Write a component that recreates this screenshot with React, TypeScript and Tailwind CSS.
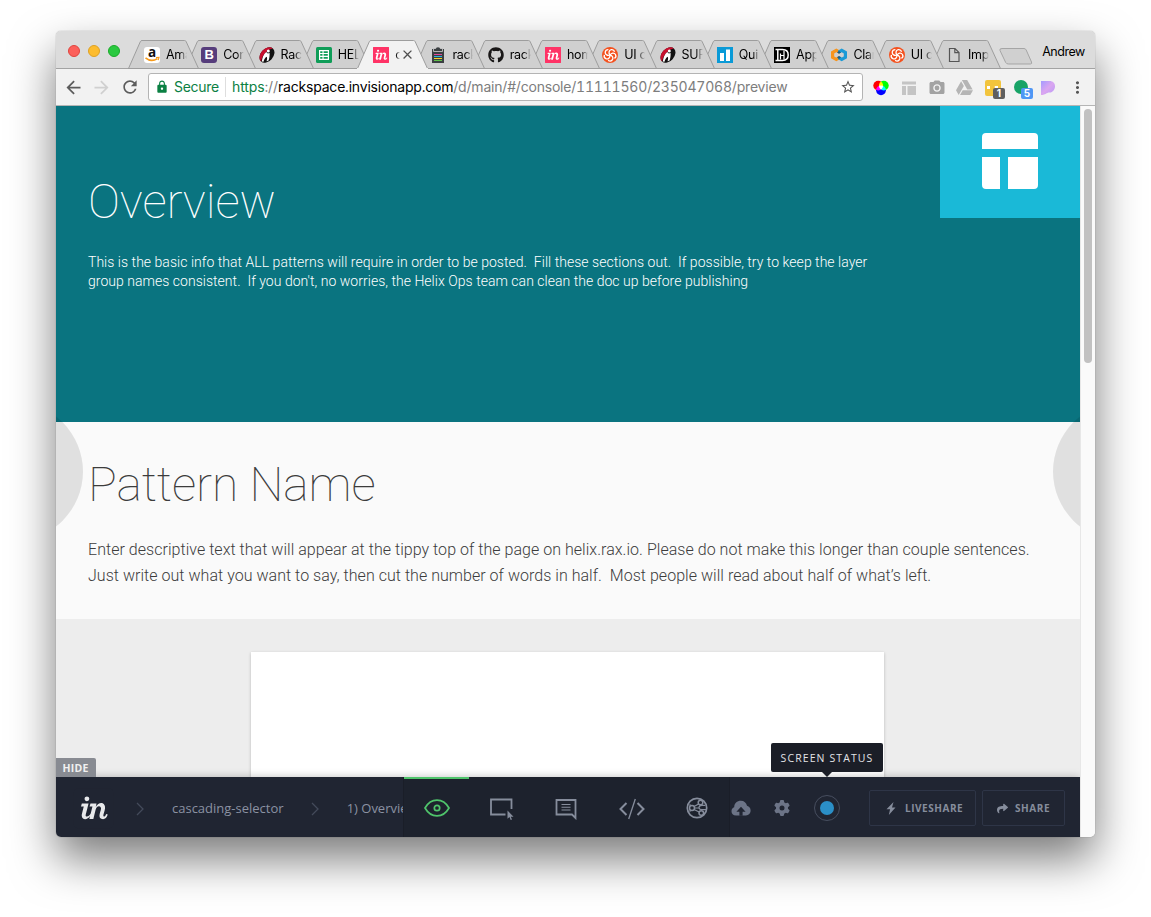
import type { ReactNode } from "react";
import { FaGithub, FaInvision, FaGoogleDrive, FaShare } from "react-icons/fa";
import { FaGear } from "react-icons/fa6";
import {
  MdArrowBack,
  MdArrowForward,
  MdRefresh,
  MdLock,
  MdStarBorder,
  MdMoreVert,
  MdCameraAlt,
  MdClose,
} from "react-icons/md";

function Amazon() {
  return (
    <span className="block h-4 w-4 rounded-[3px] bg-white">
      <svg viewBox="0 0 16 16" className="h-4 w-4 overflow-visible">
        <text x="4" y="9.800" fontSize="13.500" fontWeight="700" fontFamily="Open Sans, sans-serif" fill="#111">a</text>
        <path d="M1.500 10.800c3.600 3 8.400 3 12 .8" fill="none" stroke="#f79b1b" strokeWidth="1.600" />
        <path d="M12 10.600l3-.3-.8 2.800" fill="none" stroke="#f79b1b" strokeWidth="1.100" />
      </svg>
    </span>
  );
}

function Bootstrap() {
  return (
    <span className="flex h-4 w-4 items-center justify-center rounded-[3px] bg-[#563d7c] font-['Liberation_Sans',sans-serif] text-[13px] leading-4 font-bold text-white">
      B
    </span>
  );
}

function Rackspace() {
  return (
    <svg viewBox="0 0 16 16" className="h-4 w-4">
      <g transform="rotate(42 8 8)">
        <ellipse cx="8" cy="8" rx="6.200" ry="8.800" fill="#111" />
        <path d="M8-.8C4-.8 1.800 4 1.800 8c0 4.200 2.200 8.800 6.200 8.800-1.600-2.400-2.600-5-2.600-8.800S6.400 1.500 8-.8z" fill="#c8102e" />
      </g>
      <path d="M2.800 14.500c.6-4 1.500-7.200 4.400-9.600l1.600 1.700 1.800-.6c.2 2.400-.2 5.200-1 7.500l-2 .8c.6-2 .7-3.500.1-4.500-1.600 1-2.600 2.600-3.200 4.900z" fill="#fff" />
      <circle cx="9.300" cy="3.900" r="1.500" fill="#fff" />
    </svg>
  );
}

function Sheets() {
  return (
    <svg viewBox="0 0 16 16" className="h-4 w-4">
      <rect width="16" height="16" rx="1.500" fill="#0f9d58" />
      <rect x="3" y="3" width="10" height="10" fill="#fff" />
      <path d="M4.200 4.200h2.300v1.700H4.200zM7.600 4.200h4.200v1.700H7.600zM4.200 7h2.300v1.800H4.200zM7.600 7h4.200v1.800H7.600zM4.200 10h2.300v1.800H4.200zM7.600 10h4.200v1.800H7.600z" fill="#0f9d58" />
    </svg>
  );
}

function Invision() {
  return (
    <span className="block h-4 w-4 overflow-hidden rounded-[1px] bg-[#ff3366]">
      <FaInvision className="-mt-[2px] -ml-[2px] h-5 w-5 bg-[linear-gradient(#fff,#fff)] bg-[length:72%_64%] bg-center bg-no-repeat text-[#ff3366]" />
    </span>
  );
}

function Clipboard() {
  return (
    <svg viewBox="0 0 16 16" className="h-4 w-4">
      <path d="M2 2h12v14H2z" fill="#3b3f42" />
      <path d="M3.500 1.500h2.200C6 .3 7 0 8 0s2 .3 2.300 1.500h2.200v3h-9z" fill="#3b3f42" stroke="#d0d0d0" strokeWidth=".8" />
      <path d="M4 7.500h8" stroke="#e0499c" />
      <path d="M4 9.500h8" stroke="#2bb5e0" />
      <path d="M4 11.500h8" stroke="#f5d327" />
      <path d="M4 13.500h8" stroke="#5fbf4a" />
    </svg>
  );
}

function Swirl() {
  return (
    <svg viewBox="0 0 16 16" className="h-4 w-4">
      <circle cx="8" cy="8" r="8" fill="#f4511e" />
      <g fill="none" stroke="#fff" strokeWidth="1.300">
        {[0, 72, 144, 216, 288].map((a) => (
          <g key={a} transform={`rotate(${a} 8 8)`}>
            <path d="M8 8C6.300 6 6.800 3.200 9.200 2.600 11 2.300 12.200 3.400 12.600 4.800" />
          </g>
        ))}
      </g>
    </svg>
  );
}

function Bars() {
  return (
    <svg viewBox="0 0 16 16" className="h-4 w-4">
      <rect width="16" height="16" fill="#0a9ad7" />
      <path d="M3 6h4v8H3zM9 2.500h4V14H9z" fill="#fff" />
    </svg>
  );
}

function DA() {
  return (
    <svg viewBox="0 0 16 16" className="h-4 w-4">
      <rect width="16" height="16" fill="#000" />
      <path d="M1.500 2.600H8.500c3.700 0 5.700 2.200 5.700 5.400s-2 5.400-5.700 5.400H1.500M3.800 3v10" fill="none" stroke="#fff" strokeWidth="1.500" />
      <path d="M6.500 12.500V6.500M6.500 8.500h3.500M10 3.500v9" fill="none" stroke="#fff" strokeWidth="1.200" />
    </svg>
  );
}

function Hexes() {
  return (
    <svg viewBox="0 0 16 16" className="h-4 w-4">
      <path d="M8.500 5.200L5.300 3.400 1.600 5.500v4.800l3.700 2.100 3.200-1.800" fill="none" stroke="#f7941e" strokeWidth="3.200" />
      <path d="M7.500 5.200l3.200-1.800 3.700 2.100v4.800l-3.700 2.100-3.200-1.800" fill="none" stroke="#1b9ad6" strokeWidth="3.200" />
      <path d="M6 5.600l2-1.700 2 1.700-2 1.200zM6 10.200L8 9l2 1.200-2 1.700z" fill="#1d5a80" />
    </svg>
  );
}

function Page() {
  return (
    <svg viewBox="0 0 16 16" className="h-4 w-4">
      <path d="M3.500 1.500h5.500l4 4v9h-9.500zM8.800 1.500v4.200h4.200" fill="none" stroke="#555" strokeWidth="1.200" />
    </svg>
  );
}

type TabData = { icon: ReactNode; title: string; active?: boolean };

const tabs: TabData[] = [
  { icon: <Amazon />, title: "Ama" },
  { icon: <Bootstrap />, title: "Cor" },
  { icon: <Rackspace />, title: "Rac" },
  { icon: <Sheets />, title: "HEL" },
  { icon: <Invision />, title: "c", active: true },
  { icon: <Clipboard />, title: "rack" },
  { icon: <FaGithub className="h-4 w-4 text-[#191717]" />, title: "rack" },
  { icon: <Invision />, title: "hom" },
  { icon: <Swirl />, title: "UI c" },
  { icon: <Rackspace />, title: "SUP" },
  { icon: <Bars />, title: "Qui" },
  { icon: <DA />, title: "App" },
  { icon: <Hexes />, title: "Clar" },
  { icon: <Swirl />, title: "UI c" },
  { icon: <Page />, title: "Imp" },
];

function Tab({ tab, index }: { tab: TabData; index: number }) {
  return (
    <div
      className="relative -mr-[13.73px] h-[29px] w-[71px] shrink-0"
      style={{ zIndex: tab.active ? 30 : 20 - index }}
    >
      <svg viewBox="0 0 71 29" className="absolute inset-0 h-[29px] w-[71px]">
        <path
          d="M.5 28.500L12.300 1.700Q12.800.5 14 .5H56.500Q57.700.5 58.200 1.700L70.500 28.500"
          fill={tab.active ? "#f2f2f2" : "#d0d0d0"}
          stroke="#9d9d9d"
        />
        <path d="M0 28.500H71" stroke={tab.active ? "#f2f2f2" : "#9d9d9d"} />
      </svg>
      <div className="relative flex h-[29px] items-center pl-[16px]">
        {tab.icon}
        <span
          className={`ml-[6px] block overflow-hidden font-[Inter,sans-serif] text-[12.500px] leading-4 tracking-[-0.3px] whitespace-nowrap text-black ${
            tab.active
              ? "w-[5px] [mask-image:linear-gradient(to_right,#000_20%,transparent)]"
              : "w-[21px] [mask-image:linear-gradient(to_right,#000_65%,transparent)]"
          }`}
        >
          {tab.title}
        </span>
        {tab.active && <MdClose className="h-[15px] w-[15px] text-[#505050]" />}
      </div>
    </div>
  );
}

function TabStrip() {
  return (
    <div className="flex h-[38px] shrink-0 border-b border-[#a3a3a3] bg-[#dcdcdc]">
      <div className="flex gap-2 pt-[14px] pl-3">
        <span className="h-3 w-3 rounded-full border border-[#e0443e] bg-[#fc605b]" />
        <span className="h-3 w-3 rounded-full border border-[#dea123] bg-[#fdbc2e]" />
        <span className="h-3 w-3 rounded-full border border-[#1aab29] bg-[#2ac940]" />
      </div>
      <div className="mt-[9px] ml-2 flex">
        {tabs.map((t, i) => (
          <Tab key={i} tab={t} index={i} />
        ))}
      </div>
      <svg viewBox="0 0 34 17" className="mt-[17px] ml-[12px] h-[17px] w-[34px] shrink-0">
        <path d="M3 .5H25q1.500 0 2.200 1.500L32.500 14q.8 2-1.200 2H9.500q-2 0-2.800-1.500L1 2.500Q.2.5 3 .5z" fill="#d0d0d0" stroke="#a5a5a5" />
      </svg>
      <span className="mt-[13px] ml-[9px] font-[Inter,sans-serif] text-[12.500px] leading-4 tracking-[-0.5px] text-black">Andrew</span>
    </div>
  );
}

function Extensions() {
  return (
    <div className="flex items-center pt-px">
      <svg viewBox="0 0 16 16" className="isolate ml-[10px] h-4 w-4">
        <circle cx="5.200" cy="5.600" r="4.900" fill="#f00" className="mix-blend-screen" />
        <circle cx="10.800" cy="5.600" r="4.900" fill="#0f0" className="mix-blend-screen" />
        <circle cx="8" cy="10.300" r="4.900" fill="#00f" className="mix-blend-screen" />
      </svg>
      <svg viewBox="0 0 16 16" className="ml-[12px] h-4 w-4">
        <path d="M1 1.500h14v3H1zM1 6h4v9H1zM6.500 6H15v9H6.500z" fill="#c4c4c4" />
      </svg>
      <MdCameraAlt className="ml-[11px] h-[18px] w-[18px] text-[#a3a3a3]" />
      <FaGoogleDrive className="ml-[10px] h-[17px] w-[17px] text-[#b5b5b5]" />
      <span className="relative ml-[12px] block h-4 w-4 rounded-[2px] bg-[#f2c43d]">
        <span className="absolute top-[6px] left-[2px] h-[3px] w-[11px] border-t-[3px] border-dotted border-white" />
        <span className="absolute top-2 left-2 h-[11px] w-3 rounded-[2px] bg-[#5f5f5f] text-center font-[Inter,sans-serif] text-[10px] leading-[11px] font-bold text-white">1</span>
      </span>
      <span className="relative ml-[12px] block h-4 w-4">
        <span className="absolute top-0 left-[1px] block h-[14px] w-[14px] rounded-full bg-[#17a366]" />
        <span className="absolute top-2 left-2 h-[11px] w-3 rounded-[2px] bg-[#4f97f5] text-center font-[Inter,sans-serif] text-[10px] leading-[11px] font-bold text-white">5</span>
      </span>
      <svg viewBox="0 0 16 16" className="ml-[12px] h-4 w-4">
        <defs>
          <linearGradient id="petal" x1="0" y1="0" x2="1" y2="1">
            <stop offset="0" stopColor="#a49bff" />
            <stop offset=".5" stopColor="#dba6f0" />
            <stop offset="1" stopColor="#b89af8" />
          </linearGradient>
        </defs>
        <path d="M0 1h8.500c3.500 0 5.500 2.200 5.500 5.200S12 12.500 8.500 12.500c-1.500 0-2.500.5-4 1.500L1.500 15 0 15z" fill="url(#petal)" />
      </svg>
      <MdMoreVert className="ml-[11px] h-[19px] w-[19px] text-[#555]" />
    </div>
  );
}

function AddressBar() {
  return (
    <div className="flex h-[37px] shrink-0 items-center border-b border-[#b5b5b5] bg-[#f2f2f2]">
      <MdArrowBack className="ml-[7px] h-[21px] w-[21px] text-[#5c5c5c]" />
      <MdArrowForward className="ml-[7px] h-[21px] w-[21px] text-[#d0d0d0]" />
      <MdRefresh className="ml-[8px] h-5 w-5 text-[#5c5c5c]" />
      <div className="ml-[8px] flex h-7 w-[715px] items-center rounded-[3px] border border-[#b4b4b4] bg-white font-[Inter,sans-serif] text-[14px] whitespace-nowrap">
        <MdLock className="ml-[6px] h-[14px] w-[14px] text-[#0b8043]" />
        <span className="ml-[5px] w-[46px] pb-px tracking-[-0.3px] text-[#0b8043]">Secure</span>
        <span className="ml-[5px] h-5 w-px bg-[#dedede]" />
        <span className="ml-[6px] flex-1 pb-px tracking-[-0.2px] text-[#7d7d7d] tabular-nums">
          <span className="tracking-[-0.12px] text-[#0b8043]">https</span><span className="tracking-[-0.12px]">://</span><span className="text-black">rackspace.invisionapp.com</span>/d/main/#/console/11111560/235047068/preview
        </span>
        <MdStarBorder className="mr-[6px] h-4 w-4 text-[#555]" />
      </div>
      <Extensions />
    </div>
  );
}

function Hero() {
  return (
    <section className="flex h-[316px] shrink-0 justify-between bg-[#0a7480] text-white">
      <div className="pt-[67px] pl-8 font-[Roboto,sans-serif]">
        <h1 className="text-[48px] leading-[58px] font-thin tracking-[-0.1px]">Overview</h1>
        <p className="mt-[22px] text-[14px] leading-[19px] font-light tracking-[0.03px] whitespace-pre">
          {"This is the basic info that ALL patterns will require in order to be posted.  Fill these sections out.  If possible, try to keep the layer\ngroup names consistent.  If you don't, no worries, the Helix Ops team can clean the doc up before publishing"}
        </p>
      </div>
      <div className="flex h-28 w-[140px] items-center justify-center bg-[#1ab9d7] pb-0.5">
        <svg viewBox="0 0 56 56" className="h-14 w-14" fill="#fff">
          <path d="M4 0h48a4 4 0 0 1 4 4v12H0V4a4 4 0 0 1 4-4zM0 24h18v32H4a4 4 0 0 1-4-4zM26 24h30v28a4 4 0 0 1-4 4H26z" />
        </svg>
      </div>
    </section>
  );
}

function PatternIntro() {
  return (
    <section className="h-[197px] shrink-0 bg-[#fafafa] pt-[34px] pl-8 font-[Roboto,sans-serif] text-[#3c3c3c]">
      <h2 className="text-[48px] leading-[58px] font-thin tracking-[-0.1px]">Pattern Name</h2>
      <p className="mt-[23px] text-[16px] leading-[26px] font-light tracking-[0.036px] whitespace-pre">
        {"Enter descriptive text that will appear at the tippy top of the page on helix.rax.io. Please do not make this longer than couple sentences.\nJust write out what you want to say, then cut the number of words in half.  Most people will read about half of what\u2019s left."}
      </p>
    </section>
  );
}

function Chevron() {
  return (
    <svg viewBox="0 0 8 14" className="h-[14px] w-2 shrink-0" fill="none" stroke="#434a5a" strokeWidth="1.300">
      <path d="M1 1l6 6-6 6" />
    </svg>
  );
}

function Mode({ children, active }: { children: ReactNode; active?: boolean }) {
  return (
    <div className={`flex h-[60px] w-[65px] items-center justify-center border-t-2 pb-px ${active ? "border-[#4fc46b] text-[#4fc46b]" : "border-transparent text-[#868d9c]"}`}>
      {children}
    </div>
  );
}

function ModeBar() {
  return (
    <div className="flex w-[327px] shrink-0 border-x border-[#1a1e28] bg-[#1d222d]">
      <Mode active>
        <svg viewBox="0 0 26 18" className="h-[18px] w-[26px]" fill="none" stroke="currentColor" strokeWidth="1.700">
          <path d="M1 9C7-1.500 19-1.500 25 9 19 19.500 7 19.500 1 9z" />
          <circle cx="13" cy="9" r="2.700" />
        </svg>
      </Mode>
      <Mode>
        <svg viewBox="0 0 26 24" className="mt-[3px] h-6 w-[26px]" fill="none" stroke="currentColor" strokeWidth="1.800">
          <path d="M16.500 17.500H2v-15h20.500v9.500" />
          <path d="M18.500 13.500v8.200l2-1.700 1.200 3 1.300-.6-1.200-2.700h2.700z" fill="currentColor" stroke="none" />
        </svg>
      </Mode>
      <Mode>
        <svg viewBox="0 0 22 22" className="mt-[2px] mr-px h-[22px] w-[22px]" fill="none" stroke="currentColor" strokeWidth="1.800">
          <path d="M20.500 20V2H1.500v14.500h15.500z" />
          <path d="M6.500 6.500h9M6.500 9.200h9M6.500 12h9" strokeWidth="1.100" />
        </svg>
      </Mode>
      <Mode>
        <svg viewBox="0 0 26 22" className="mt-[3px] h-[22px] w-[26px]" fill="none" stroke="currentColor" strokeWidth="2">
          <path d="M7.500 5L1.500 11l6 6M18.500 5l6 6-6 6" />
          <path d="M16.300 1L9.700 21" strokeWidth="1.300" />
        </svg>
      </Mode>
      <Mode>
        <svg viewBox="0 0 22 22" className="mt-px ml-px h-[22px] w-[22px]" fill="none" stroke="currentColor" strokeWidth="1.500">
          <circle cx="11" cy="11" r="9.700" strokeWidth="1.700" />
          <circle cx="6" cy="11" r="2.500" />
          <circle cx="14.500" cy="5.500" r="2.300" />
          <circle cx="15.300" cy="16" r="2.300" />
          <path d="M8 9.500l4.600-2.600M8 12.500l5.200 2.500M8.500 11h4.500M20 12.700h-4c-2.200 0-3-.7-3-2.200s1-2.200 3-2.200h3.500M2.500 8h2.500M2.500 14h2.500" strokeWidth="1.200" />
        </svg>
      </Mode>
    </div>
  );
}

function StatusButton() {
  return (
    <div className="relative ml-[24px] flex h-[26px] w-[26px] shrink-0 items-center justify-center rounded-full border border-[#474e5f]">
      <span className="h-[14px] w-[14px] rounded-full bg-[#2b8fc7]" />
      <div className="absolute bottom-[48px] left-1/2 -ml-[56px] flex h-[29px] w-28 items-center justify-center rounded-[2px] bg-[#1b1e27] pt-0.5 text-[10.500px] tracking-[1.100px] whitespace-nowrap text-[#e3e4e7]">
        SCREEN STATUS
        <svg viewBox="0 0 10 5" className="absolute top-full left-[51px] h-[5px] w-[10px]">
          <path d="M0 0h10L5 5z" fill="#1b1e27" />
        </svg>
      </div>
    </div>
  );
}

function ConsoleBar() {
  return (
    <footer className="relative flex h-[60px] shrink-0 bg-[#202532] font-['Open_Sans',sans-serif] shadow-[0_0_8px_rgba(0,0,0,0.25)]">
      <div className="absolute bottom-full left-0 flex h-[19px] w-10 items-center justify-center rounded-tr-[2px] bg-[#888b92] pt-0.5 pr-px text-[10.500px] font-bold tracking-[0.2px] text-[#f0f0f0]">
        HIDE
      </div>
      <div className="flex w-[347px] shrink-0 items-center overflow-hidden text-[13px] whitespace-nowrap text-[#8b92a2]">
        <FaInvision className="mt-[2px] ml-[15px] h-[45px] w-[45px] shrink-0 bg-[linear-gradient(#e8e9eb,#e8e9eb)] bg-[length:70%_60%] bg-center bg-no-repeat text-[#202532]" />
        <span className="ml-[20px] flex pt-1"><Chevron /></span>
        <span className="ml-[28px] w-[112px] pt-[3px]">cascading-selector</span>
        <span className="ml-[27px] flex pt-1"><Chevron /></span>
        <span className="ml-[28px] pt-[3px]">1) Overview</span>
      </div>
      <ModeBar />
      <div className="flex flex-1 items-center pt-0.5">
        <svg viewBox="0 0 20 16" className="ml-px h-4 w-5 shrink-0">
          <path d="M5 15.500C2 15.500.5 13.500.5 11.200c0-2 1-3.400 2.700-4C3.200 3.500 6 .8 9.800.8c3.300 0 5.600 2 6.200 5 2.300.6 3.600 2.400 3.600 4.800 0 2.900-2 4.900-4.600 4.900z" fill="#6c7487" />
          <path d="M10 6.700l4.600 5h-3v4H8.400v-4h-3z" fill="#202532" />
        </svg>
        <FaGear className="ml-[23px] h-4 w-4 shrink-0 text-[#6c7487]" />
        <StatusButton />
        <button className="ml-[29px] flex h-9 w-[107px] items-center rounded-[2px] border border-[#2e3547] pt-px pl-[16px] text-[10px] font-bold tracking-[0.55px] text-[#868d9c]">
          <svg viewBox="0 0 10 13" className="mr-[9px] h-[13px] w-[10px]" fill="currentColor">
            <path d="M7.500 0L.5 7.300h3.600L2.800 13 9.500 5.500H6z" />
          </svg>
          LIVESHARE
        </button>
        <button className="ml-[6px] flex h-9 w-[83px] items-center rounded-[2px] border border-[#2e3547] pt-px pl-[14px] text-[10px] font-bold tracking-[0.6px] text-[#868d9c]">
          <FaShare className="mr-[7px] h-[11px] w-[11px]" />
          SHARE
        </button>
      </div>
    </footer>
  );
}

export default function App() {
  return (
    <div className="h-[917px] w-[1151px] overflow-hidden bg-white pt-[31px] pl-[56px]">
      <div className="w-[1039px] rounded-[5px] shadow-[0_0_1px_rgba(0,0,0,0.5),0_22px_45px_rgba(0,0,0,0.52)]">
        <div className="flex h-[806px] flex-col overflow-hidden rounded-[5px]">
          <TabStrip />
          <AddressBar />
          <div className="flex h-[731px]">
            <main className="relative flex w-[1024px] flex-col overflow-hidden">
              <Hero />
              <PatternIntro />
              <section className="flex h-[158px] shrink-0 bg-[#ededed] pt-[33px] pl-[195px]">
                <div className="w-[633px] bg-white shadow-[0_1px_3px_rgba(0,0,0,0.22)]" />
              </section>
              <ConsoleBar />
              <span className="absolute top-[296px] -left-[112px] h-[139px] w-[139px] rounded-full bg-black/10" />
              <span className="absolute top-[296px] -right-[112px] h-[139px] w-[139px] rounded-full bg-black/10" />
            </main>
            <aside className="w-[15px] border-l border-[#e7e7e7] bg-[#fafafa] pt-[3px] pl-[3px]">
              <div className="h-[254px] w-2 rounded-full bg-[#c1c1c1]" />
            </aside>
          </div>
        </div>
      </div>
    </div>
  );
}
